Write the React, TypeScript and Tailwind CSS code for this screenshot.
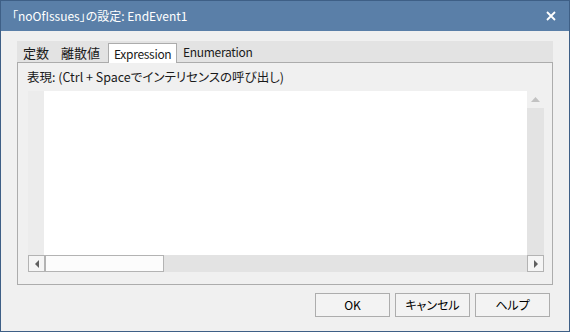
import React from "react";

const font = { fontFamily: '"Noto Sans CJK JP", "Noto Sans", sans-serif' };

function Tab({ label, w, selected, cjk }: { label: string; w: string; selected?: boolean; cjk?: boolean }) {
  const size = cjk ? "text-[13px]" : "text-[12px] tracking-[-0.3px]";
  if (selected) {
    return (
      <div
        className={`${w} ${size} h-[20px] -mb-px relative z-10 bg-white border border-b-0 border-[#acacac] flex items-center pl-[5px] text-[#1a1a1a] leading-none`}
      >
        {label}
      </div>
    );
  }
  return (
    <div className={`${w} ${size} h-[20px] flex items-center pl-[6px] text-[#1a1a1a] leading-none`}>
      {label}
    </div>
  );
}

function Btn({ label }: { label: string }) {
  return (
    <div className="w-[75px] h-[24px] border border-[#adadad] bg-[#f3f3f3] flex items-center justify-center text-[12px] text-black leading-none">
      {label}
    </div>
  );
}

export default function App() {
  return (
    <div className="w-[570px] h-[332px] bg-[#3e5f86] p-px [font-feature-settings:'palt']" style={font}>
      <div className="flex flex-col h-full bg-[#f0f0f0]">
        {/* title bar */}
        <div className="h-[30px] bg-[#5a7fa8] flex items-center pl-[11px] pr-[13px] text-white text-[12px] leading-none">
          <span>「noOfIssues」の設定: EndEvent1</span>
          <svg className="ml-auto" width="10" height="10" viewBox="0 0 10 10">
            <path d="M1 1 L9 9 M9 1 L1 9" stroke="white" strokeWidth="1.8" />
          </svg>
        </div>

        {/* tabs + panel */}
        <div className="px-[16px] pt-[10px]">
          <div className="h-[21px] bg-[#e3e3e3] flex items-end">
            <Tab label="定数" w="w-[38px]" cjk />
            <Tab label="離散値" w="w-[53px]" cjk />
            <Tab label="Expression" w="w-[69px]" selected />
            <Tab label="Enumeration" w="w-[80px]" />
          </div>
          <div className="h-[223px] border border-[#acacac] bg-[#f0f0f0] flex flex-col">
            <div className="h-[28px] flex items-center pl-[9px] text-[12.5px] text-[#1a1a1a] leading-none">
              表現: (Ctrl + Spaceでインテリセンスの呼び出し)
            </div>
            <div className="ml-[10px] w-[516px] h-[181px] flex flex-col">
              <div className="flex-1 flex">
                <div className="w-[16px] bg-[#ececec]" />
                <div className="flex-1 bg-white" />
                <div className="w-[17px] flex flex-col bg-[#e3e3e3]">
                  <div className="h-[17px] bg-[#f0f0f0] flex items-center justify-center">
                    <svg width="9" height="5" viewBox="0 0 9 5">
                      <path d="M4.5 0 L9 5 L0 5 Z" fill="#c2c2c2" />
                    </svg>
                  </div>
                </div>
              </div>
              <div className="h-[17px] flex bg-[#e3e3e3]">
                <div className="w-[17px] border border-[#b3b3b3] bg-[#f5f5f5] flex items-center justify-center">
                  <svg width="4" height="8" viewBox="0 0 4 8">
                    <path d="M4 0 L0 4 L4 8 Z" fill="#606060" />
                  </svg>
                </div>
                <div className="w-[119px] border border-[#b3b3b3] bg-[#fcfcfc]" />
                <div className="flex-1" />
                <div className="w-[17px] border border-[#b3b3b3] bg-[#f5f5f5] flex items-center justify-center">
                  <svg width="4" height="8" viewBox="0 0 4 8">
                    <path d="M0 0 L4 4 L0 8 Z" fill="#606060" />
                  </svg>
                </div>
              </div>
            </div>
          </div>
        </div>

        {/* buttons */}
        <div className="flex justify-end gap-[5px] pr-[19px] pt-[8px]">
          <Btn label="OK" />
          <Btn label="キャンセル" />
          <Btn label="ヘルプ" />
        </div>
      </div>
    </div>
  );
}
